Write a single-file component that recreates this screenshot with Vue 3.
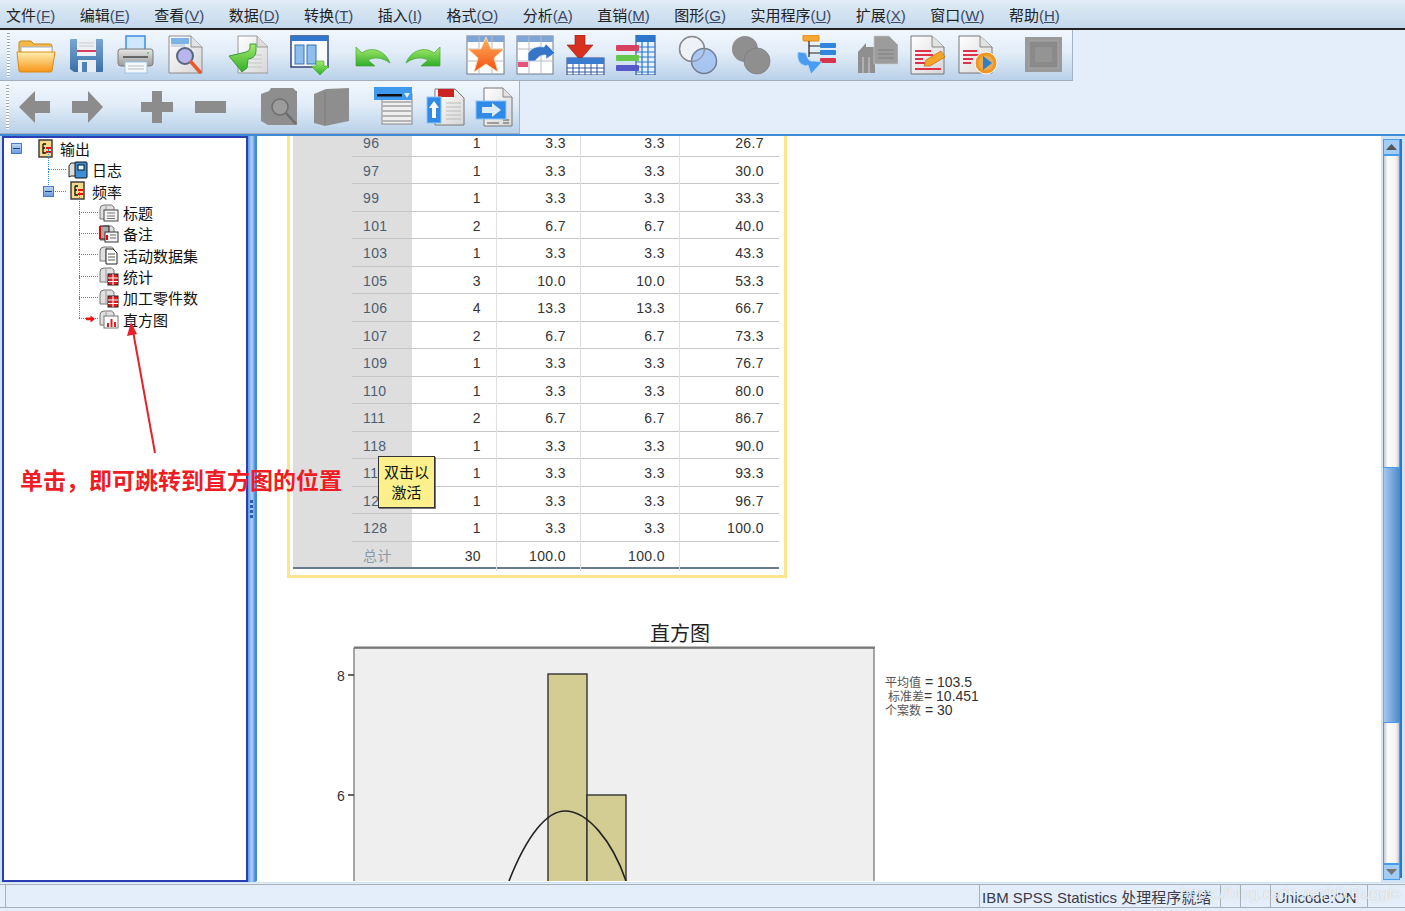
<template>
  <div class="app">
    <svg class="defs" width="0" height="0">
      <defs>
        <linearGradient id="gOrange" x1="0" y1="0" x2="0" y2="1"><stop offset="0" stop-color="#ffefb0" /><stop offset="1" stop-color="#f79416" /></linearGradient>
        <linearGradient id="gBlue" x1="0" y1="0" x2="0" y2="1"><stop offset="0" stop-color="#79a6d2" /><stop offset="1" stop-color="#3a70a8" /></linearGradient>
        <linearGradient id="gGreen" x1="0" y1="0" x2="0" y2="1"><stop offset="0" stop-color="#a6ea6a" /><stop offset="1" stop-color="#2fae2a" /></linearGradient>
        <linearGradient id="gGrey" x1="0" y1="0" x2="0" y2="1"><stop offset="0" stop-color="#e6e6e6" /><stop offset="1" stop-color="#9a9a9a" /></linearGradient>
        <linearGradient id="gPage" x1="0" y1="0" x2="1" y2="1"><stop offset="0" stop-color="#ffffff" /><stop offset="1" stop-color="#d6d6d6" /></linearGradient>
        <linearGradient id="gStar" x1="0" y1="0" x2="0" y2="1"><stop offset="0" stop-color="#ffb060" /><stop offset="1" stop-color="#f2500f" /></linearGradient>
      </defs>
    </svg>

    <div class="menubar">
      <span v-for="m in menus" :key="m.key" class="menu">{{ m.zh }}<em>(<u>{{ m.key }}</u>)</em></span>
    </div>

    <div class="toolbar tb1">
      <i class="grip"></i>
      <!-- open -->
      <svg class="ic" viewBox="0 0 40 40"><path d="M3 8q0-2 2-2h10l3 3h16q2 0 2 2v10H3z" fill="#f6b845" stroke="#c98a1a" /><rect x="5" y="12" width="31" height="10" fill="#fff" stroke="#9db4d0" /><path d="M1 17h38l-3 19q0 1-2 1H5q-2 0-2-1z" fill="url(#gOrange)" stroke="#d88a18" /></svg>
      <!-- save -->
      <svg class="ic" viewBox="0 0 40 40"><path d="M4 5q0-1 1-1h31q1 0 1 1v31q0 1-1 1H8l-4-3z" fill="url(#gBlue)" /><rect x="11" y="4" width="19" height="17" fill="#eef1f4" /><path d="M13 8h15M13 11h15" stroke="#c8ccd2" /><rect x="11" y="15" width="19" height="2" fill="#d63c5c" /><rect x="12" y="25" width="18" height="12" fill="#e8edf2" /><rect x="16" y="27" width="5" height="10" fill="#4d82b6" /></svg>
      <!-- print -->
      <svg class="ic" viewBox="0 0 40 40"><rect x="10" y="1" width="19" height="14" fill="#cfe6fd" stroke="#3b8fe2" stroke-width="1.5" /><path d="M4 14h31q2 0 2 3v11q0 3-3 3H5q-3 0-3-3V17q0-3 2-3z" fill="url(#gGrey)" stroke="#7a7a7a" /><rect x="7" y="21" width="25" height="2" fill="#666" /><circle cx="32" cy="18" r="1" fill="#5bc05b" /><rect x="9" y="27" width="22" height="11" fill="#f4f8fc" stroke="#9cc4ea" /><path d="M12 31h16M12 34h16" stroke="#bbb" /></svg>
      <!-- preview -->
      <svg class="ic" viewBox="0 0 40 40"><path d="M3 1h22l11 11v26H3z" fill="url(#gPage)" stroke="#8c8c8c" /><path d="M25 1v11h11" fill="#e4e4e4" stroke="#8c8c8c" /><rect x="5" y="3" width="18" height="6" fill="#7cb4e8" /><rect x="5" y="9" width="14" height="3" fill="#cfd8e2" /><circle cx="19" cy="21" r="8" fill="#b8b4ec" stroke="#57667e" stroke-width="2" /><path d="M25 27l9 10" stroke="#e8582c" stroke-width="3.5" stroke-linecap="round" /></svg>
      <!-- goto -->
      <svg class="ic m22" viewBox="0 0 40 40"><path d="M10 1h19l11 11v26H10z" fill="url(#gPage)" stroke="#999" /><path d="M29 1v11h11" fill="#ddd" stroke="#999" /><path d="M16 20h18M16 24h18M18 28h16M18 32h16" stroke="#c6c6c6" /><path d="M1 21l13-3 4-1q4-1 4-4V9h6v7q0 7-8 8l-1 9-5 4z" fill="url(#gGreen)" stroke="#3a9c3a" /></svg>
      <!-- columns -->
      <svg class="ic m22" viewBox="0 0 40 40"><rect x="1" y="1" width="37" height="31" fill="#f8fafc" stroke="#30457e" stroke-width="1.5" /><rect x="1" y="1" width="37" height="5" fill="#2f76cc" /><rect x="5" y="10" width="9" height="19" fill="#8fbdec" stroke="#3672b8" /><rect x="17" y="10" width="9" height="19" fill="#8fbdec" stroke="#3672b8" /><path d="M26 26h8v5h5l-9 9-9-9h5z" fill="url(#gGreen)" stroke="#2c9a2c" stroke-width=".5" /></svg>
      <!-- undo -->
      <svg class="ic m22" viewBox="0 0 40 40"><path d="M4 12v19h19l-7-6c6-3 14-3 22 3-5-13-19-17-28-10z" fill="url(#gGreen)" stroke="#49a33c" stroke-width=".7" /></svg>
      <!-- redo -->
      <svg class="ic m12" viewBox="0 0 40 40"><path d="M36 12v19H17l7-6c-6-3-14-3-22 3 5-13 19-17 28-10z" fill="url(#gGreen)" stroke="#49a33c" stroke-width=".7" /></svg>
      <!-- star table -->
      <svg class="ic m22" viewBox="0 0 40 40"><rect x="1" y="1" width="37" height="38" fill="#fff" stroke="#6c7a8a" /><rect x="1" y="1" width="37" height="6" fill="#7fa4d6" /><path d="M1 14h37M1 26h37M13 1v38M26 1v38" stroke="#b4bcc6" /><path d="M20 2l5 12h13l-10 9 4 14-12-8-12 8 4-14L2 14h13z" fill="url(#gStar)" stroke="#f9e2b8" stroke-width=".8" /></svg>
      <!-- table with arrow -->
      <svg class="ic" viewBox="0 0 40 40"><rect x="1" y="1" width="36" height="38" fill="#fff" stroke="#6c7a8a" /><rect x="1" y="1" width="36" height="6" fill="#7fa4d6" /><path d="M1 14h36M1 26h36M13 1v38M25 1v38" stroke="#b4bcc6" /><rect x="2" y="27" width="10" height="5" fill="#e6527a" /><path d="M12 26v-8q6-8 16-6l2-3 9 9-9 6v-4q-6-1-11 6z" fill="#3574c6" stroke="#e9f1fb" stroke-width=".6" /></svg>
      <!-- insert down -->
      <svg class="ic" viewBox="0 0 40 40"><path d="M9 0h10v10h8L14 25 1 10h8z" fill="#d8301e" stroke="#8c1c10" stroke-width=".6" /><rect x="1" y="23" width="37" height="17" fill="#fff" stroke="#2c3f8a" /><rect x="1" y="23" width="37" height="6" fill="#3a7cd0" /><path d="M1 33h37M1 37h37M7 29v11M13 29v11M19 29v11M25 29v11M31 29v11" stroke="#2c58a8" /></svg>
      <!-- bars table -->
      <svg class="ic" viewBox="0 0 40 40"><rect x="20" y="0" width="19" height="40" fill="#e8f2fc" stroke="#1f3f8e" /><rect x="20" y="0" width="19" height="7" fill="#2d76cc" /><path d="M20 12h19M20 17h19M20 22h19M20 27h19M20 32h19M20 37h19M26 7v33M32 7v33" stroke="#2d76cc" stroke-width="1.2" /><rect x="0" y="10" width="23" height="6" rx="1" fill="#d94060" /><rect x="0" y="20" width="23" height="6" rx="1" fill="#66c84a" /><rect x="0" y="30" width="23" height="6" rx="1" fill="#5458c8" /></svg>
      <!-- venn -->
      <svg class="ic m22" viewBox="0 0 40 40"><circle cx="14" cy="14" r="12.5" fill="#eef2f8" stroke="#8a8a8a" stroke-width="1.5" /><circle cx="26" cy="26" r="12.5" fill="#a4c2f2" fill-opacity=".9" stroke="#707e94" stroke-width="1.5" /><circle cx="14" cy="14" r="12.5" fill="none" stroke="#8a8a8a" stroke-width="1" /></svg>
      <!-- venn grey -->
      <svg class="ic m13" viewBox="0 0 40 40"><circle cx="14" cy="14" r="13" fill="#8f8f8f" /><circle cx="26" cy="26" r="13" fill="#8f8f8f" stroke="#7e7e7e" stroke-width=".8" /></svg>
      <!-- outline tree -->
      <svg class="ic m25" viewBox="0 0 40 40"><rect x="7" y="0" width="16" height="6" rx="1" fill="#f6a832" stroke="#e08a18" /><path d="M13 6v16M13 11h12M13 18h12" stroke="#222" stroke-width="1.2" /><rect x="24" y="8" width="16" height="5" rx="1" fill="#2f86dc" /><rect x="24" y="15" width="16" height="5" rx="1" fill="#2f86dc" /><rect x="24" y="23" width="16" height="5" rx="1" fill="#d8344a" /><path d="M2 17q-2 12 8 14l2-1 3 9 11-12-8-1q-6 2-8-8z" fill="#4a9cf0" stroke="#bcdcfa" stroke-width=".7" /></svg>
      <!-- grey pivot -->
      <svg class="ic m22" viewBox="0 0 40 40"><path d="M0 17l8-9v4h9v26H0z" fill="#8f8f8f" /><path d="M5 22v16M11 22v16" stroke="#bcbcbc" stroke-width="1.5" /><path d="M16 1h15l9 9v19H16z" fill="#9c9c9c" stroke="#c8c8c8" stroke-width=".7" /><path d="M20 15h16M20 19h16M20 23h16" stroke="#7e7e7e" /></svg>
      <!-- edit doc -->
      <svg class="ic" viewBox="0 0 40 40"><path d="M3 1h21l12 11v27H3z" fill="url(#gPage)" stroke="#777" /><path d="M24 1v11h12" fill="#e2e2e2" stroke="#888" /><path d="M7 16h16M7 20h18M7 24h8M7 28h10M7 34h26" stroke="#e0304a" stroke-width="2" /><path d="M16 31l2-6 15-9 4 6-15 9z" fill="#f6a428" stroke="#b86c10" stroke-width=".7" /></svg>
      <!-- play doc -->
      <svg class="ic" viewBox="0 0 40 40"><path d="M1 1h21l12 11v26H1z" fill="url(#gPage)" stroke="#777" /><path d="M22 1v11h12" fill="#e2e2e2" stroke="#888" /><path d="M5 16h14M5 20h16M5 24h10M5 28h8" stroke="#e0304a" stroke-width="2" /><circle cx="28" cy="28" r="11" fill="#f0961e" stroke="#fff" stroke-width="1" /><circle cx="28" cy="28" r="7.5" fill="#e8ab55" /><path d="M25 21l9 7-9 7z" fill="#2d7ecb" /></svg>
      <!-- grey frame -->
      <svg class="ic m26" viewBox="0 0 40 40"><rect x="1" y="2" width="37" height="35" fill="#9a9a9a" /><rect x="5" y="6" width="29" height="27" fill="#8a8a8a" stroke="#a6a6a6" /><rect x="11" y="12" width="17" height="15" fill="#949494" /></svg>
    </div>

    <div class="toolbar tb2">
      <i class="grip"></i>
      <svg class="ic" viewBox="0 0 40 40"><path d="M4 20L20 4v10h15v12H20v10z" fill="#8c8c8c" /></svg>
      <svg class="ic m13" viewBox="0 0 40 40"><path d="M35 20L20 4v10H4v12h16v10z" fill="#8c8c8c" /></svg>
      <svg class="ic m29" viewBox="0 0 40 40"><path d="M15 4h10v11h11v10H25v11H15V25H4V15h11z" fill="#8c8c8c" /></svg>
      <svg class="ic m13" viewBox="0 0 40 40"><rect x="5" y="14" width="31" height="12" fill="#8c8c8c" /></svg>
      <svg class="ic m30" viewBox="0 0 40 40"><path d="M1 7l8-3 2-3h22l3 3h1v34H8l-7-4z" fill="#8e8e8e" /><circle cx="20" cy="20" r="8" fill="#9c9c9c" stroke="#6e6e6e" stroke-width="1.5" /><path d="M26 26l10 11" stroke="#6e6e6e" stroke-width="2.5" /></svg>
      <svg class="ic m12" viewBox="0 0 40 40"><path d="M2 7l12-5 23-1v33l-24 5-11-3z" fill="#8e8e8e" /><path d="M13 5v33" stroke="#7c7c7c" /></svg>
      <svg class="ic m21" viewBox="0 0 40 40"><rect x="9" y="7" width="30" height="30" fill="#f0f0f0" stroke="#888" /><path d="M9 15h30M9 19h30M9 24h30M9 29h30M9 34h30" stroke="#b5b5b5" stroke-width="2" /><rect x="1" y="0" width="38" height="13" fill="#3f9aee" /><rect x="4" y="7" width="25" height="2.5" fill="#111" /><path d="M31 6h6l-3 5z" fill="#d8ecff" /></svg>
      <svg class="ic m13" viewBox="0 0 40 40"><path d="M9 2h20l9 9v27H9z" fill="url(#gPage)" stroke="#777" /><rect x="12" y="2" width="16" height="8" fill="#cc2222" /><path d="M20 16h15M20 20h15M20 24h15M20 28h15M20 32h15" stroke="#bbb" /><rect x="1" y="10" width="14" height="26" fill="#2f8ae8" stroke="#8cc4fa" /><path d="M8 14l5 7h-3v10H6V21H3z" fill="#fff" /></svg>
      <svg class="ic m9" viewBox="0 0 40 40"><path d="M9 1h19l9 9v29H9z" fill="url(#gPage)" stroke="#777" /><path d="M28 1v9h9" fill="#e2e2e2" stroke="#888" /><path d="M28 33h6M28 36h6M12 36h12" stroke="#555" /><rect x="1" y="14" width="30" height="18" fill="#2f8ae8" stroke="#8cc4fa" /><path d="M7 20h10v-4l9 7-9 7v-4H7z" fill="#dcecfc" /></svg>
    </div>

    <div class="main">
      <div class="tree">
        <div v-for="n in nodes" :key="n.text" class="node" :class="[`lv${n.level}`, n.cls]">
          <b v-if="n.open" class="exp"></b>
          <i v-if="n.current" class="cur"></i>
          <svg class="tic" viewBox="0 0 20 20">
            <template v-if="n.icon === 'out'">
              <rect x="3" y="1" width="13" height="17" fill="#f6d98a" stroke="#333" stroke-width="1.4" />
              <path d="M7 5v9h3M7 5h3M7 9h2" stroke="#111" stroke-width="1.3" fill="none" /><path d="M10 9h5M10 13h5" stroke="#e01010" stroke-width="2" />
            </template>
            <template v-else-if="n.icon === 'log'">
              <path d="M1 6l2-3h6v13H3l-2 1z" fill="#ddd" stroke="#222" /><rect x="7" y="2" width="12" height="16" rx="1" fill="#3d8fd8" stroke="#111" /><rect x="10" y="5" width="6" height="5" fill="#dff" stroke="#111" />
            </template>
            <template v-else>
              <path d="M1 6q0-4 4-4h4q4-1 6 2v12H1z" fill="#e0e0e0" stroke="#777" /><path d="M7 3v12" stroke="#999" />
              <template v-if="n.icon === 'title'">
                <rect x="5" y="7" width="14" height="11" fill="#f4f4f4" stroke="#444" /><path d="M8 10h8M8 13h8M8 15.5h8" stroke="#777" />
              </template>
              <template v-else-if="n.icon === 'note'">
                <path d="M1 2h9v13H1z" fill="#aaa" stroke="#111" /><path d="M1 2v13" stroke="#e00" stroke-width="2" /><rect x="6" y="8" width="13" height="10" fill="#f6f6f6" stroke="#333" /><path d="M8 11v5" stroke="#e00" stroke-width="2" /><path d="M11 11h6M11 14h6" stroke="#666" />
              </template>
              <template v-else-if="n.icon === 'data'">
                <path d="M7 4h7l4 4v11H7z" fill="#fff" stroke="#222" /><path d="M9 9h7M9 12h7M9 15h7" stroke="#555" />
              </template>
              <template v-else-if="n.icon === 'table'">
                <rect x="9" y="8" width="10" height="11" fill="#e02020" stroke="#222" /><path d="M9 12h10M9 15.5h10M14 8v11" stroke="#fff" />
              </template>
              <template v-else>
                <rect x="5" y="7" width="14" height="12" fill="#fff" stroke="#777" /><path d="M8 18v-4h2v4zM11.5 18v-8h2v8zM15 18v-5h2v5z" fill="#e02020" />
              </template>
            </template>
          </svg>
          <span>{{ n.text }}</span>
        </div>
      </div>

      <div class="splitter"><i></i><i></i><i></i><i></i></div>

      <div class="viewer">
        <div class="frame">
          <div class="table">
            <div class="side"></div>
            <div class="rows">
              <div v-for="r in rows" :key="r.label" class="row">
                <span class="label" :class="{ total: r.label === '总计' }">{{ r.label }}</span>
                <span class="num">{{ r.freq }}</span>
                <span class="num">{{ r.pct }}</span>
                <span class="num">{{ r.pct }}</span>
                <span class="num">{{ r.cum }}</span>
              </div>
            </div>
          </div>
          <div class="tip">双击以<br />激活</div>
        </div>

        <div class="chart-title">直方图</div>
        <div class="chart">
          <svg class="plot" width="538" height="240" viewBox="0 0 538 240">
            <rect x="17" y="3" width="520" height="240" fill="#efefef" stroke="#555" />
            <path d="M17 2.5h521" stroke="#777" stroke-width="2" />
            <path d="M11 30h6M11 150h6" stroke="#333" stroke-width="1.5" />
            <text x="0" y="36" class="tick">8</text>
            <text x="0" y="156" class="tick">6</text>
            <rect x="211" y="29" width="39" height="215" fill="#d3cd94" stroke="#333" stroke-width="1.4" />
            <rect x="250" y="150" width="39" height="95" fill="#d3cd94" stroke="#333" stroke-width="1.4" />
            <path d="M172 236C190 190 210 166 228 166C250 166 275 195 289 236" fill="none" stroke="#222" stroke-width="1.6" />
          </svg>
          <div class="stats">
            <div><span>平均值</span> = 103.5</div>
            <div class="ind"><span>标准差</span>= 10.451</div>
            <div><span>个案数</span> = 30</div>
          </div>
        </div>
      </div>

      <div class="scroll">
        <div class="sbtn"><svg width="15" height="8" viewBox="0 0 15 8"><path d="M7.5 1L13 7H2z" fill="#555" /></svg></div>
        <div class="thumb up"></div>
        <div class="track"></div>
        <div class="thumb down"></div>
        <div class="sbtn"><svg width="15" height="8" viewBox="0 0 15 8"><path d="M7.5 7L13 1H2z" fill="#777" /></svg></div>
      </div>
    </div>

    <div class="status">
      <div class="cell first"></div>
      <div class="cell msg">IBM SPSS Statistics 处理程序就绪</div>
      <div class="cell c3"></div>
      <div class="cell c4"></div>
      <div class="cell uni">Unicode:ON</div>
      <div class="cell"></div>
      <span class="mark">https://blog.csdn.net/NicBuggie</span>
    </div>

    <div class="note">单击，即可跳转到直方图的位置</div>
    <svg class="pointer" width="40" height="140" viewBox="0 0 40 140">
      <path d="M31 132L9 10" stroke="#e8202a" stroke-width="2" />
      <path d="M7 1L3 15l10-2z" fill="#e8202a" />
    </svg>
  </div>
</template>

<script setup>
const menus = [
  { zh: '文件', key: 'F' },
  { zh: '编辑', key: 'E' },
  { zh: '查看', key: 'V' },
  { zh: '数据', key: 'D' },
  { zh: '转换', key: 'T' },
  { zh: '插入', key: 'I' },
  { zh: '格式', key: 'O' },
  { zh: '分析', key: 'A' },
  { zh: '直销', key: 'M' },
  { zh: '图形', key: 'G' },
  { zh: '实用程序', key: 'U' },
  { zh: '扩展', key: 'X' },
  { zh: '窗口', key: 'W' },
  { zh: '帮助', key: 'H' }
]

const nodes = [
  { text: '输出', level: 0, icon: 'out', open: true },
  { text: '日志', level: 1, icon: 'log', cls: 'leaf' },
  { text: '频率', level: 1, icon: 'out', open: true, cls: 'leaf' },
  { text: '标题', level: 2, icon: 'title', cls: 'first' },
  { text: '备注', level: 2, icon: 'note' },
  { text: '活动数据集', level: 2, icon: 'data' },
  { text: '统计', level: 2, icon: 'table' },
  { text: '加工零件数', level: 2, icon: 'table' },
  { text: '直方图', level: 2, icon: 'chart', current: true }
]

const rows = [
  ['96', 1, '3.3', '26.7'],
  ['97', 1, '3.3', '30.0'],
  ['99', 1, '3.3', '33.3'],
  ['101', 2, '6.7', '40.0'],
  ['103', 1, '3.3', '43.3'],
  ['105', 3, '10.0', '53.3'],
  ['106', 4, '13.3', '66.7'],
  ['107', 2, '6.7', '73.3'],
  ['109', 1, '3.3', '76.7'],
  ['110', 1, '3.3', '80.0'],
  ['111', 2, '6.7', '86.7'],
  ['118', 1, '3.3', '90.0'],
  ['119', 1, '3.3', '93.3'],
  ['125', 1, '3.3', '96.7'],
  ['128', 1, '3.3', '100.0'],
  ['总计', 30, '100.0', '']
].map(([label, freq, pct, cum]) => ({ label, freq, pct, cum }))
</script>

<style>
html,
body {
  margin: 0;
  background: #fff;
}
</style>

<style scoped>
.app {
  position: relative;
  width: 1405px;
  height: 911px;
  overflow: hidden;
  display: flex;
  flex-direction: column;
  background: #e3eefa;
  font-family: "Liberation Sans", "Noto Sans CJK SC", sans-serif;
  color: #222;
}

.defs {
  position: absolute;
}

.menubar {
  height: 28px;
  flex: none;
  display: flex;
  align-items: center;
  gap: 24.5px;
  padding-left: 6px;
  background: linear-gradient(#e0ebf6, #c5d9ec);
  border-bottom: 2px solid #222;
  font-size: 15px;
}

.menu em {
  font-style: normal;
  color: #3a4a66;
}

.toolbar {
  flex: none;
  height: 51px;
  display: flex;
  align-items: center;
  box-sizing: border-box;
  background: linear-gradient(#f1f7fe, #e2edf8 45%, #b9d1e9);
  border-right: 1px solid #a3b3c4;
  border-bottom: 1px solid #a3aeba;
}

.tb1 {
  width: 1073px;
  padding-left: 7px;
}

.tb2 {
  width: 520px;
  height: 53px;
  padding-left: 6px;
}

.grip {
  width: 3px;
  height: 44px;
  margin-right: 6px;
  background: repeating-linear-gradient(#9aa8b8 0 1px, #fff 1px 3px);
}

.ic {
  width: 40px;
  height: 40px;
  flex: none;
  margin-left: 10px;
}

.grip + .ic {
  margin-left: 0;
}

.m9 { margin-left: 9px; }
.m12 { margin-left: 12px; }
.m13 { margin-left: 13px; }
.m21 { margin-left: 21px; }
.m22 { margin-left: 22px; }
.m25 { margin-left: 25px; }
.m26 { margin-left: 26px; }
.m29 { margin-left: 29px; }
.m30 { margin-left: 30px; }

.main {
  flex: none;
  height: 749px;
  box-sizing: border-box;
  display: flex;
  padding: 0 3px 1px 2px;
  border-top: 2px solid #3f8ad4;
  background: #cfe2f6;
}

.tree {
  width: 246px;
  flex: none;
  box-sizing: border-box;
  border: 2px solid #2b3fb4;
  background: #fff;
  font-size: 15px;
  color: #111;
}

.node {
  position: relative;
  height: 21.3px;
  display: flex;
  align-items: center;
}

.lv0 { padding-left: 32px; }
.lv1 { padding-left: 64px; }
.lv2 { padding-left: 95px; }

.tic {
  width: 20px;
  height: 20px;
  margin-right: 4px;
  flex: none;
}

.exp {
  position: absolute;
  top: 5px;
  width: 9px;
  height: 9px;
  border: 1px solid #4a78c8;
  background: linear-gradient(#bcd6f4, #6c9ce0);
}

.exp::after {
  content: "";
  position: absolute;
  left: 1px;
  right: 1px;
  top: 4px;
  height: 1px;
  background: #1d3f80;
}

.lv0 .exp { left: 7px; }
.lv1 .exp { left: 39px; z-index: 1; }

.leaf::before {
  content: "";
  position: absolute;
  left: 44px;
  top: -10px;
  height: 20px;
  border-left: 1px dotted #2e8be6;
}

.leaf::after {
  content: "";
  position: absolute;
  left: 44px;
  top: 10px;
  width: 18px;
  border-top: 1px dotted #2e8be6;
}

.lv2::before {
  content: "";
  position: absolute;
  left: 75px;
  top: -10px;
  height: 20px;
  border-left: 1px dotted #2e8be6;
}

.lv2::after {
  content: "";
  position: absolute;
  left: 75px;
  top: 10px;
  width: 19px;
  border-top: 1px dotted #2e8be6;
}

.cur {
  position: absolute;
  left: 82px;
  top: 7px;
  width: 9px;
  height: 7px;
  z-index: 1;
  background: #f01010;
  clip-path: polygon(0 30%, 50% 30%, 50% 0, 100% 50%, 50% 100%, 50% 70%, 0 70%);
}

.splitter {
  width: 7px;
  flex: none;
  display: flex;
  flex-direction: column;
  align-items: center;
  justify-content: center;
  gap: 2px;
  background: linear-gradient(90deg, #5d98de, #b3d3f6 55%, #4a90de);
}

.splitter i {
  width: 3px;
  height: 3px;
  background: #2d5ea8;
}

.viewer {
  flex: 1;
  min-width: 0;
  overflow: hidden;
  background: #fff;
  border-left: 2px solid #3f8ad4;
  border-bottom: 1px solid #fff;
}

.frame {
  position: relative;
  width: 500px;
  box-sizing: border-box;
  margin: -10px 0 0 30px;
  padding: 0 5px 6px 3px;
  border: 3px solid #ffe48f;
  border-top-color: transparent;
}

.table {
  display: flex;
  border-bottom: 2px solid #6b7a88;
}

.side {
  width: 59px;
  flex: none;
  background: #dedede;
}

.rows {
  flex: 1;
  background: linear-gradient(90deg, #dedede 60px, #fff 60px);
}

.row {
  display: grid;
  grid-template-columns: 61px 84px 84px 99px 99px;
  height: 27.5px;
  box-sizing: border-box;
  line-height: 29px;
  border-bottom: 1.5px solid #c6c6c6;
  font-size: 14px;
  letter-spacing: .4px;
  color: #333;
}

.row:last-child {
  height: 25.5px;
  border-bottom: 0;
}

.label {
  padding-left: 11px;
  color: #4c6072;
}

.label.total {
  color: #8a98a4;
}

.num {
  text-align: right;
  padding-right: 15px;
  border-right: 1px solid #dfdfdf;
}

.num:nth-child(3),
.num:nth-child(4) {
  padding-right: 14px;
}

.num:last-child {
  padding-right: 15px;
  border-right: 0;
}

.tip {
  position: absolute;
  left: 88px;
  top: 327px;
  width: 57px;
  height: 52px;
  box-sizing: border-box;
  border: 1px solid #333;
  background: #fbf08c;
  box-shadow: 1px 1px 0 #777;
  text-align: center;
  font-size: 15px;
  line-height: 20px;
  padding-top: 6px;
  color: #111;
}

.chart-title {
  width: 846px;
  margin-top: 43px;
  height: 26px;
  text-align: center;
  font-size: 20px;
  line-height: 26px;
  color: #222;
}

.chart {
  display: flex;
  margin-left: 80px;
  margin-top: -2px;
}

.plot {
  flex: none;
}

.tick {
  font-size: 14px;
  fill: #333;
}

.stats {
  margin: 30px 0 0 10px;
  font-size: 14px;
  line-height: 14px;
  color: #333;
  white-space: nowrap;
}

.stats div {
  height: 14px;
}

.stats span {
  font-size: 12px;
  color: #555;
}

.stats .ind {
  padding-left: 3px;
}

.scroll {
  width: 17px;
  flex: none;
  margin: 3px 0 4px 2px;
  display: flex;
  flex-direction: column;
  border-right: 2px solid #2a78c8;
  background: #fff;
}

.sbtn {
  height: 16px;
  flex: none;
  display: flex;
  align-items: center;
  justify-content: center;
  background: #a4cdf5;
  border: 1px solid #4a9be8;
  box-sizing: border-box;
}

.thumb {
  flex: none;
  box-sizing: border-box;
  border: 1px solid #4a9be8;
  background: linear-gradient(90deg, #c8c8d0, #fdfdfd 25%, #f2f2f4 80%, #c4c4cc);
}

.thumb.up {
  height: 313px;
}

.thumb.down {
  height: 142px;
}

.track {
  flex: none;
  height: 254px;
  border-left: 1px solid #6aaef0;
  background: linear-gradient(90deg, #a6c8ea, #4a88cc);
}

.status {
  position: relative;
  flex: none;
  height: 24px;
  margin-top: 1px;
  display: flex;
  box-sizing: border-box;
  padding-left: 5px;
  border-top: 1px solid #a8b0b8;
  border-bottom: 1px solid #a8b0b8;
  background: #e3eefa;
  font-size: 15px;
  line-height: 25px;
  color: #3a3a4a;
  overflow: hidden;
}

.cell {
  border-left: 1px solid #a8b0b8;
  white-space: nowrap;
}

.first { width: 973px; }
.msg { width: 238px; padding-left: 2px; }
.c3 { width: 19px; }
.c4 { width: 29px; }
.uni { width: 92px; padding-left: 4px; }

.mark {
  position: absolute;
  left: 1180px;
  top: 0;
  font-size: 16px;
  line-height: 18px;
  color: rgba(255, 255, 255, .8);
  text-shadow: 0 0 1px rgba(120, 130, 140, .5);
  white-space: nowrap;
}

.note {
  position: absolute;
  left: 20px;
  top: 465px;
  font-size: 23px;
  line-height: 32px;
  font-weight: 700;
  color: #ee1c25;
  white-space: nowrap;
}

.pointer {
  position: absolute;
  left: 124px;
  top: 321px;
}
</style>
